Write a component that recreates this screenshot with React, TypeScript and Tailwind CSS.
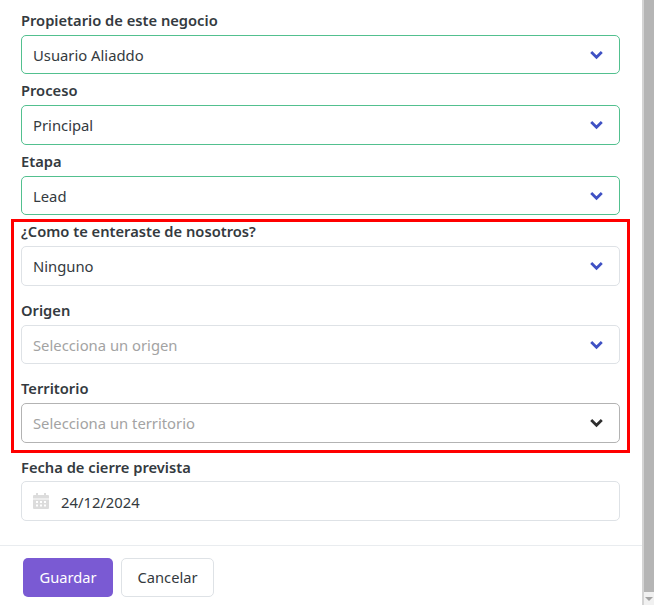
import React from "react";

const font = "font-['Noto_Sans',sans-serif]";

function Chevron({ className }: { className: string }) {
  return (
    <svg width="13" height="10" viewBox="0 0 13 10" fill="none" className={className}>
      <path d="M1.2 2 L6.5 7.2 L11.8 2" stroke="currentColor" strokeWidth="2.8" />
    </svg>
  );
}

function SelectBox({
  value,
  height,
  border,
  placeholder,
  textClass = "",
  chevron = "text-[#3f51c4]",
}: {
  value: string;
  height: string;
  border: string;
  placeholder?: boolean;
  textClass?: string;
  chevron?: string;
}) {
  return (
    <div className={`flex items-center justify-between rounded-[5px] border bg-white pl-[11px] pr-[16px] ${height} ${border}`}>
      <span className={`text-[14.8px] ${textClass} ${placeholder ? "text-[#a3a3a3]" : "text-[#343a40]"}`}>{value}</span>
      <Chevron className={chevron} />
    </div>
  );
}

function Label({ text, className }: { text: string; className: string }) {
  return <div className={`flex items-center text-[14.7px] font-semibold text-[#343a40] ${className}`}>{text}</div>;
}

export default function App() {
  return (
    <div className={`flex h-[605px] w-[654px] overflow-hidden bg-white ${font}`}>
      <div className="flex w-[642px] flex-col">
        <div className="flex flex-col pl-[21px] pr-[22px] pt-[10px]">
          <Label text="Propietario de este negocio" className="h-[25px] pb-[4px]" />
          <SelectBox value="Usuario Aliaddo" textClass="pt-[2px]" height="h-[39px]" border="border-[#52c08f]" />
          <Label text="Proceso" className="h-[31px] pt-[1px]" />
          <SelectBox value="Principal" height="h-[40px]" border="border-[#52c08f]" />
          <Label text="Etapa" className="h-[31px] pt-[1px]" />
          <SelectBox value="Lead" textClass="pt-[2px]" height="h-[39px]" border="border-[#52c08f]" />

          {/* Highlighted block */}
          <div className="-mx-[10px] mt-[4px] flex flex-col border-[3px] border-[#ff0000] px-[7px]">
            <Label text="¿Como te enteraste de nosotros?" className="h-[24px] pb-[6px]" />
            <SelectBox value="Ninguno" height="h-[40px]" border="border-[#dee2e6]" />
            <Label text="Origen" className="h-[39px] pt-[10px]" />
            <SelectBox value="Selecciona un origen" textClass="pt-[2px]" placeholder height="h-[39px]" border="border-[#dee2e6]" />
            <Label text="Territorio" className="h-[39px] pt-[9px]" />
            <SelectBox
              value="Selecciona un territorio"
              placeholder
              height="h-[40px]"
              border="border-[#b3b3b3]"
              chevron="text-[#2f2f2f]"
            />
            <div className="h-[7px]" />
          </div>

          <Label text="Fecha de cierre prevista" className="h-[28px] pt-[1px]" />
          <div className="flex h-[40px] items-center rounded-[5px] border border-[#dee2e6] bg-white pl-[11px]">
            <svg width="16" height="16" viewBox="0 0 16 16" className="mr-[12px] text-[#dcdcdc]" fill="currentColor">
              <path d="M3 0h2v2h6V0h2v2h2a1 1 0 0 1 1 1v2.5H0V3a1 1 0 0 1 1-1h2z" />
              <path
                fillRule="evenodd"
                d="M0 6.5h16V15a1 1 0 0 1-1 1H1a1 1 0 0 1-1-1zM3 8v2h2V8zm4 0v2h2V8zm4 0v2h2V8zm-8 3.5v2h2v-2zm4 0v2h2v-2zm4 0v2h2v-2z"
              />
            </svg>
            <span className="pt-[2px] text-[14.8px] text-[#343a40]">24/12/2024</span>
          </div>
        </div>

        {/* Footer */}
        <div className="mt-[24px] flex gap-[8px] border-t border-[#e9ecef] pl-[23px] pt-[12px]">
          <button className="h-[39px] w-[90px] rounded-[5px] bg-[#7a5ad3] text-[14.7px] text-white">Guardar</button>
          <button className="h-[39px] w-[93px] rounded-[5px] border border-[#dee2e6] bg-white text-[14.7px] text-[#343a40]">
            Cancelar
          </button>
        </div>
      </div>

      {/* Scrollbar */}
      <div className="flex w-[12px] flex-col border-l-2 border-[#d4d4d4] bg-[#f1f1f1]">
        <div className="h-[592px] bg-[#b5b5b5]" />
        <div className="flex flex-1 items-center justify-center">
          <div className="h-0 w-0 border-x-[4px] border-t-[4px] border-x-transparent border-t-[#a3a3a3]" />
        </div>
      </div>
    </div>
  );
}
